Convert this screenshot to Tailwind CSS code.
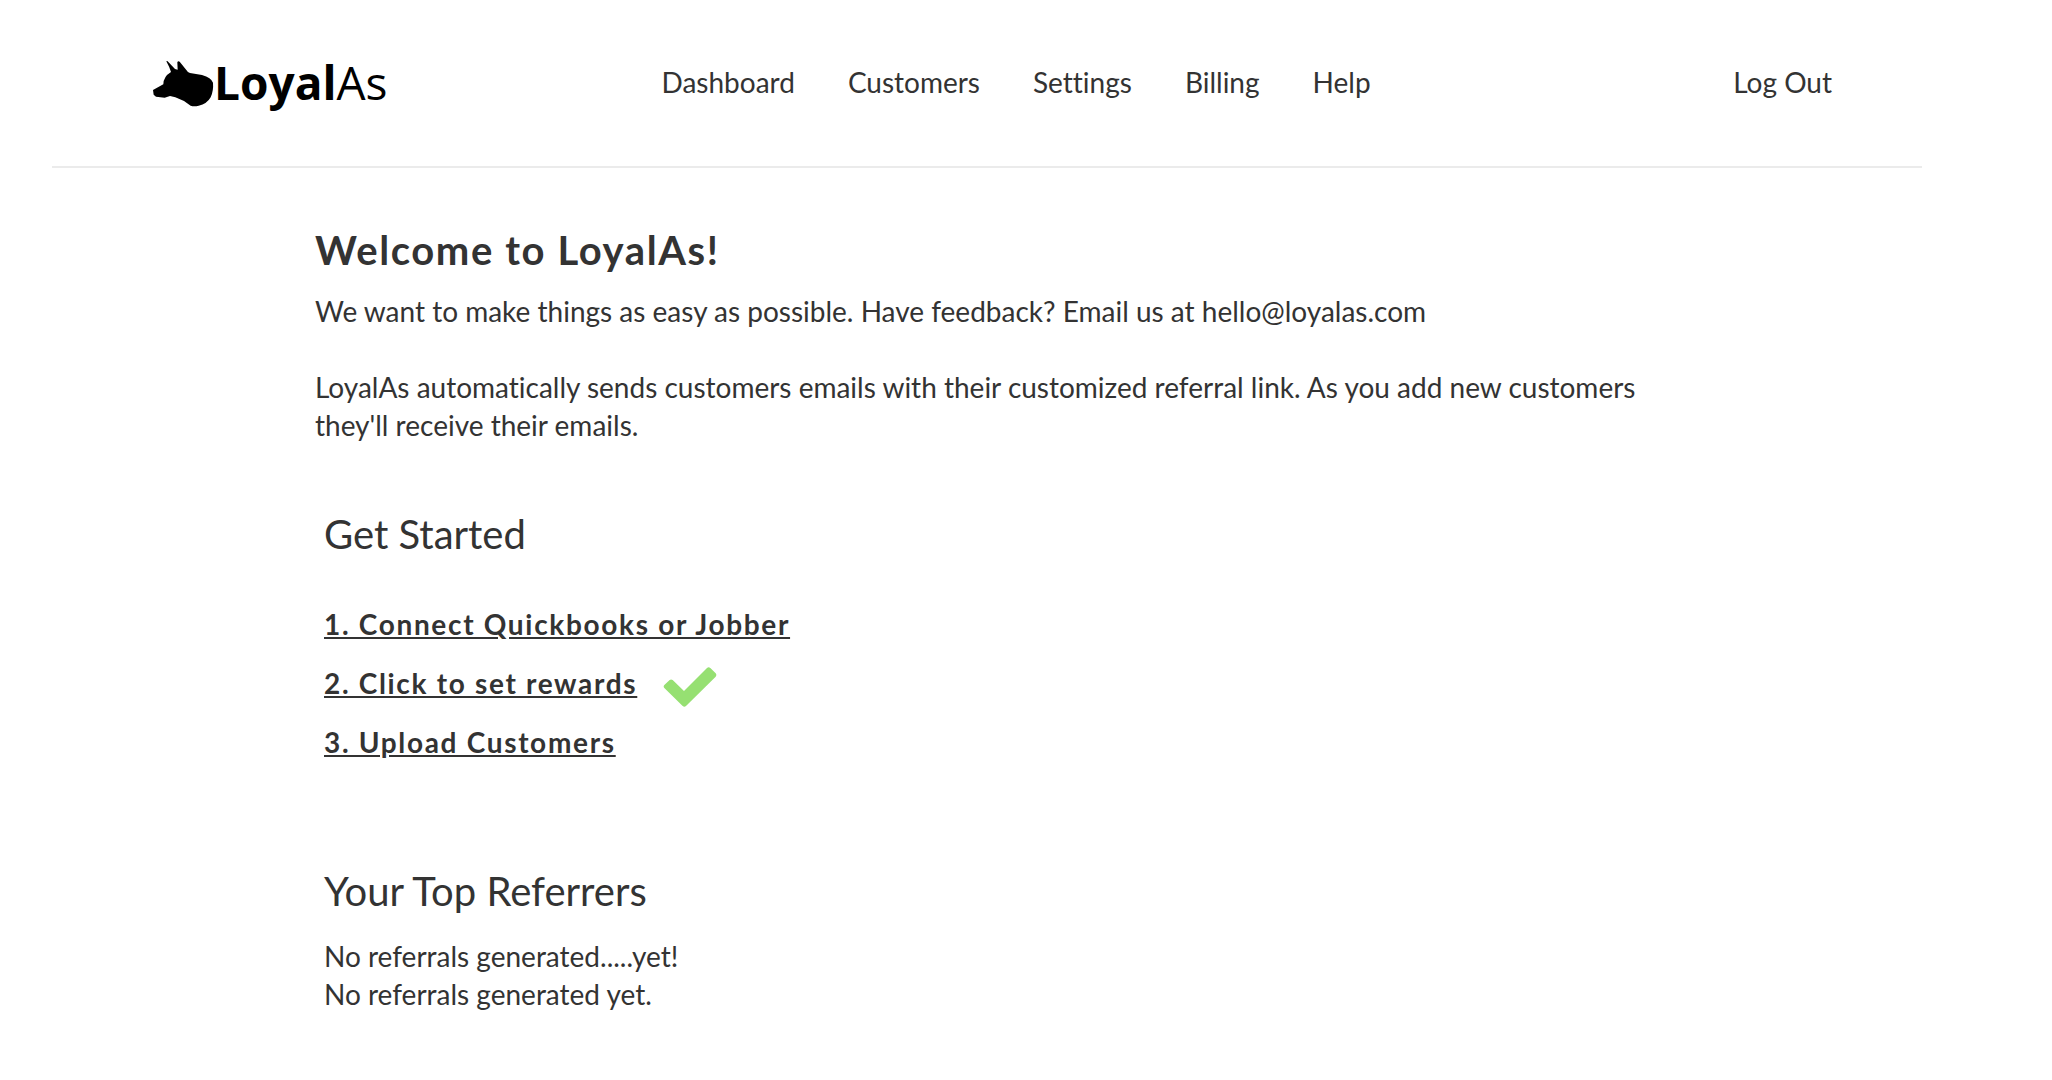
<!DOCTYPE html>
<html lang="en">
<head>
    <meta charset="UTF-8">
    <meta name="viewport" content="width=device-width, initial-scale=1.0">
    <title>LoyalAs - Dashboard</title>
    <script src="https://cdn.jsdelivr.net/npm/@tailwindcss/browser@4"></script>
</head>
<body class="bg-white font-['Lato',sans-serif] text-[28px] leading-[38px] text-[#333333] [font-variant-ligatures:none]">
    <!-- Header Section -->
    <header class="ml-[52px] mr-[130px] flex items-center border-b-2 border-[#ebebeb] pt-[54px] pb-14 pl-[100px] pr-[90px]">
        <a href="#" class="flex h-14 items-center text-black" aria-label="LoyalAs">
            <svg class="mt-1 h-[48px] w-[62px]" viewBox="0 0 186 144" fill="currentColor" aria-hidden="true">
                <path d="M43 4 Q46 2 49 6 L69 27 L77 29 L76 7 Q78 1 83 5 L103 30 Q107 37 114 39 L150 45 Q178 53 183 68 Q185 92 176 112 Q165 132 140 137 Q126 140 116 137 L96 123 L70 112 L54 108 L38 113 L12 110 L5 104 L3 90 L34 73 Q34 50 57 36 Q52 20 43 4 Z"/>
            </svg>
            <span class="font-['Open_Sans',sans-serif] text-[46px] leading-[56px]"><span class="font-bold">Loyal</span><span class="font-normal">As</span></span>
        </a>
        <nav class="ml-[274px] flex gap-[53px]">
            <a href="#">Dashboard</a>
            <a href="#">Customers</a>
            <a href="#">Settings</a>
            <a href="#">Billing</a>
            <a href="#">Help</a>
        </nav>
        <a href="#" class="ml-auto">Log Out</a>
    </header>

    <main class="ml-[315px] mr-[400px] pt-[58px]">
        <!-- Welcome text -->
        <section>
            <h1 class="text-[40px] leading-[48px] font-bold tracking-[0.04em]">Welcome to LoyalAs!</h1>
            <p class="mt-[18px]">We want to make things as easy as possible. Have feedback? Email us at hello@loyalas.com</p>
            <p class="mt-[38px]">LoyalAs automatically sends customers emails with their customized referral link. As you add new customers they'll receive their emails.</p>
        </section>

        <!-- Setup steps -->
        <section class="mt-[66px] pl-[9px]">
            <h2 class="text-[40px] leading-[48px]">Get Started</h2>
            <ol class="mt-[47px] space-y-[21px] font-bold tracking-[0.06em]">
                <li><a href="#" class="underline">1. Connect Quickbooks or Jobber</a></li>
                <li class="flex items-center">
                    <a href="#" class="underline">2. Click to set rewards</a>
                    <svg class="ml-[26px] -mb-2 h-[40px] w-[54px]" viewBox="0 0 162 120" fill="#96e072" role="img" aria-label="Done">
                        <path d="M4 54 L20 39 Q24 36 29 39 L63 72 L132 3 Q137 -1 142 3 L158 19 Q162 24 158 29 L69 117 Q64 121 59 117 L4 63 Q0 58 4 54 Z"/>
                    </svg>
                </li>
                <li><a href="#" class="underline">3. Upload Customers</a></li>
            </ol>
        </section>

        <!-- Referrers -->
        <section class="mt-[106px] pl-[9px]">
            <h2 class="text-[40px] leading-[48px]">Your Top Referrers</h2>
            <p class="mt-[22px]">No referrals generated.....yet!</p>
            <p>No referrals generated yet.</p>
        </section>
    </main>
</body>
</html>
